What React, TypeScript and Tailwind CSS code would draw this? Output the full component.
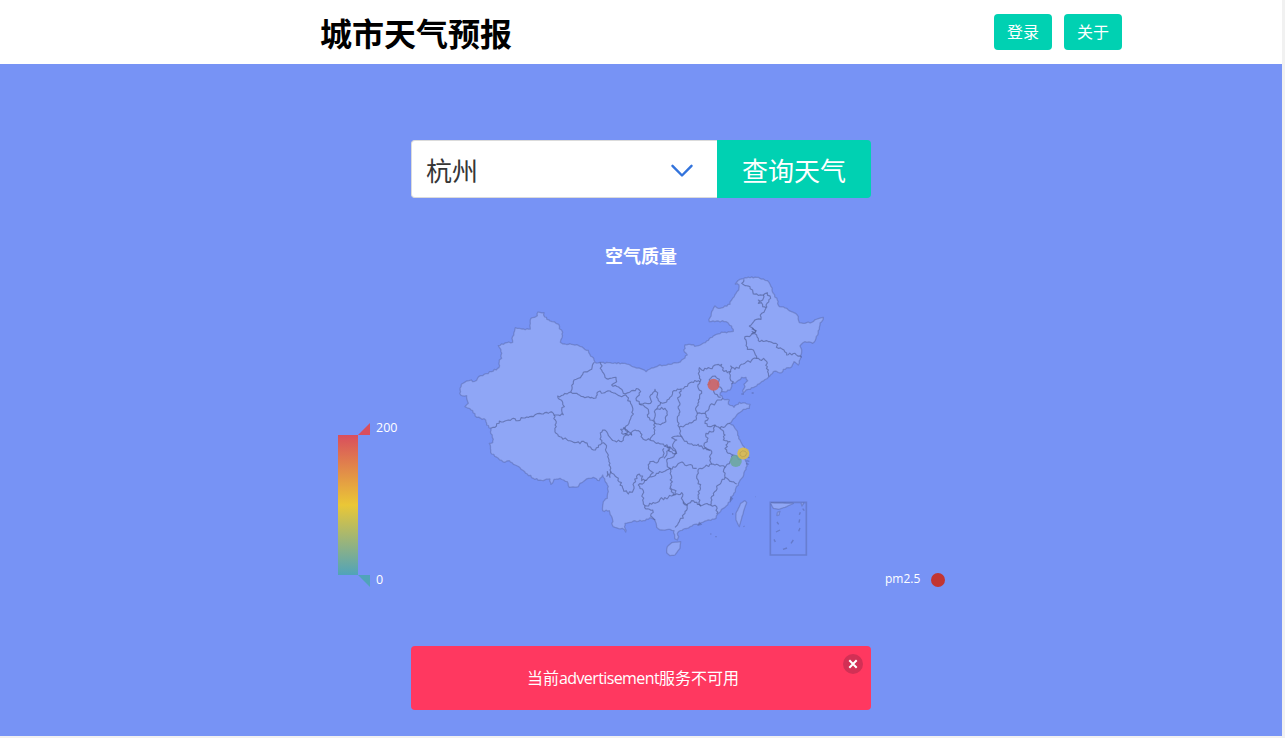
import React from "react";

type P = [number, number];

const parse = (s: string): P[] =>
  s.trim().split(/\s+/).map((p) => p.split(",").map(Number) as P);

// Adds small deterministic bends so that straight runs read as a natural border.
function rough(points: P[], amount: number): string {
  const out: string[] = [];
  points.forEach((p, i) => {
    out.push(p[0] + " " + p[1]);
    const q = points[i + 1];
    if (!q) return;
    const dx = q[0] - p[0];
    const dy = q[1] - p[1];
    const len = Math.hypot(dx, dy);
    const n = Math.floor(len / 5);
    for (let k = 1; k < n; k++) {
      const t = k / n;
      const x = p[0] + dx * t;
      const y = p[1] + dy * t;
      const s = Math.sin(x * 12.9898 + y * 78.233) * 43758.5453;
      const off = (s - Math.floor(s) - 0.5) * amount;
      out.push((x - (dy / len) * off).toFixed(1) + " " + (y + (dx / len) * off).toFixed(1));
    }
  });
  return "M" + out.join("L");
}

const mainland = `30,355 34,343 50,333 64,330 68,335 80,331 86,320 98,317 125,305 147,293 148,270 155,265 153,245 148,232 145,227 165,219 188,217 186,205 196,173 215,177 241,177 243,145 262,137 264,126 282,128 284,141 300,153 318,160 326,163 328,176 338,187 336,203 331,217 345,222 380,224 400,234 415,241 420,254 432,270 435,277 450,277 490,280 525,280 555,292 572,296 588,305 600,297 625,287 660,283 685,278 695,270 712,255 703,245 705,225 720,223 740,228 770,213 790,198 820,187 850,184 845,168 828,155 805,153 778,155 780,143 785,125 795,108 810,115 840,103 845,90 858,70 866,60 867,45 856,42 870,28 885,23 920,22 940,27 957,37 963,50 970,70 982,90 988,110 1010,115 1030,127 1045,140 1048,158 1065,160 1085,157 1105,146 1120,142 1115,155 1110,165 1108,178 1098,205 1088,220 1065,215 1050,228 1055,245 1053,262 1045,285 1032,275 1025,290 1000,298 995,308 970,305 955,322 935,335 915,350 895,358 880,368 878,362 885,350 882,343 893,332 888,322 875,322 860,335 845,342 843,355 830,365 815,365 810,375 818,385 838,390 835,402 852,412 868,397 900,403 898,415 880,418 865,430 840,460 852,470 863,490 870,510 882,530 893,545 880,565 890,578 888,598 875,625 865,640 850,675 840,695 820,715 803,732 798,745 770,752 750,760 720,770 690,782 682,790 686,800 682,810 674,806 672,782 660,778 635,780 620,772 615,750 600,743 580,752 550,753 525,760 527,786 517,775 495,772 487,765 488,750 478,722 458,722 460,695 472,685 475,665 472,645 460,622 458,615 448,632 430,622 415,625 390,640 385,650 358,652 352,635 330,625 312,628 303,643 300,627 280,632 250,625 232,612 210,593 178,572 165,577 145,565 125,552 118,520 128,518 130,508 122,490 122,475 110,465 107,450 80,442 68,422 45,410 55,400 50,377 32,375 30,355`;

const borders = [
  // Xinjiang, Tibet, Qinghai
  "122,475 135,472 148,453 165,453 175,450 190,445 198,452 220,444 250,440 258,433 290,427 310,430 312,435 325,435 340,434 335,420 343,410 338,397 328,388 323,378 340,375 362,366 366,358 372,330 385,325 400,307 425,298 430,280 433,277",
  "312,435 316,450 315,480 325,498 350,508 380,517 405,518 415,530 430,540 445,532 455,520 465,522 475,555 477,570 482,605 480,622 472,605 470,620",
  // Gansu
  "362,366 380,370 400,380 430,385 438,384 445,365 465,368 480,363 500,373 515,380 528,375 545,405 550,432 538,455 525,472 512,478 515,490 530,495 520,505 515,515 495,513 480,502 470,485 458,480 452,495 455,518",
  "450,277 455,300 465,322 480,325 498,322 500,335 485,345 510,355 520,370 535,368 545,362 565,357 572,365 568,375 558,385 568,402 590,400 605,395 602,375 615,358 622,375 625,392 632,398 650,396 660,382 668,365 682,357 692,357 705,350 720,338 745,332 750,335",
  "568,402 580,405 595,418 592,435 600,450 615,460 615,440 613,425 620,417 630,405 632,398",
  "620,417 645,415 652,435 642,458 625,462 615,460 613,485 600,510 580,508 570,485 550,482 545,495 535,485 525,472",
  "520,472 535,485 525,492 545,495",
  "600,510 635,522 660,530 650,555 642,565",
  // Shaanxi, Shanxi, Hebei
  "692,357 685,390 688,420 682,450 688,472 695,500 665,503 680,510 668,530 680,550 660,545 655,535",
  "750,335 745,355 755,370 745,390 740,410 742,430 738,450 688,472",
  "750,335 745,310 748,293 755,300 780,295 805,283 815,283 818,300 832,308 842,305 842,288 855,298 880,282 920,265 910,240 892,238 888,210 885,200 898,200 905,192 918,182 910,178 898,168 920,148 933,148 935,130 945,120 948,105 962,85 952,68 940,75 910,72 900,50 885,47 875,40 882,28",
  "940,75 938,90 925,90 925,100 934,98 938,110 948,112",
  "905,178 909,175 918,182 914,188 905,184",
  "842,305 840,325 850,335 845,342",
  "905,192 920,195 925,212 960,215 978,220 985,235 1002,240 1010,255 1035,250 1055,262",
  "920,265 945,270 952,290 956,320",
  "773,345 782,325 795,318 808,328 803,345 812,352 815,365",
  "790,360 795,372 812,382",
  "742,430 765,430 778,410 808,390 818,385",
  "765,430 775,445 765,460 778,470 795,465 810,475 825,470 840,460",
  "795,465 790,485 768,490 772,515 763,520 770,535 782,540 782,565 785,582",
  "695,500 700,508 720,522 745,523 760,537 780,542",
  "810,475 825,495 820,510 840,515 828,525 830,545 850,555 865,568 880,565",
  "850,555 840,575 825,592 805,585 785,582 765,590 745,598 740,620 750,650 745,680 752,708",
  "825,592 820,605 825,622 845,635 860,642",
  "825,622 805,645 790,670 782,705 765,702 752,708 725,692 710,705 700,695",
  "782,705 800,710 800,732",
  "660,595 675,592 690,578 715,585 740,595",
  "645,528 665,535 678,550 660,565 650,570 652,590 660,595",
  "660,595 665,620 662,655 678,662 670,675 664,665 662,650",
  "670,675 695,668 700,700 712,705 705,730 688,755 675,772",
  "642,535 640,555 625,575 600,575 595,595 610,608 600,620 625,610 650,600 660,595",
  "482,605 495,618 505,625 520,658 535,672 550,660 552,638 568,612 578,618 575,632 590,630 600,620",
  "590,630 565,645 580,662 578,690 585,707 615,700 630,688 655,682 670,675",
  "585,707 588,717 608,720 602,738 615,750",
];

const islands = [
  "650,838 652,830 665,818 692,815 690,835 675,855 660,857 650,848 650,838",
  "885,692 890,698 882,720 872,755 868,770 858,750 858,730 872,700 885,692",
  "963,702 970,715 985,718 1010,710 1030,700 963,698",
  "1053,699 1056,708 1062,698",
  "982,727 990,724 987,735 981,737 982,727",
];

const specks =
  "M981 756L986 763M978 786L990 780M972 808L976 816M999 838L1011 834M1023 820L1030 810M1046 784L1050 774M1047 758L1049 748M1058 716L1063 722M1048 734L1051 727M846 732h4M781 792h3M796 800h4M881 768l2 2M916 680h1M893 562l6 1M889 572l9 2M888 580l8 3M748 758l5 5l-8 2zM842 682l5 4l-5 6zM874 372h8M905 369h6";

function ChinaMap() {
  return (
    <svg width="380" height="300" viewBox="0 0 1140 900" role="img" aria-label="空气质量">
      <g fill="#ffffff" fillOpacity="0.18" stroke="#53619d" strokeOpacity="0.42" strokeWidth="3.8" strokeLinejoin="round">
        <path d={rough(parse(mainland), 5)} />
        {islands.map((d) => (
          <path key={d} d={rough(parse(d), 1)} />
        ))}
      </g>
      <g fill="none" stroke="#4c5a91" strokeOpacity="0.62" strokeWidth="3.4" strokeLinejoin="round">
        {borders.map((d) => (
          <path key={d} d={rough(parse(d), 8)} />
        ))}
      </g>
      <g fill="none" stroke="#5261a0" strokeWidth="4">
        <path d={specks} strokeOpacity="0.5" />
        <path d="M961 697h108v158h-108z" strokeOpacity="0.42" strokeWidth="5" />
      </g>
      <circle cx="790.500" cy="344" r="18" fill="#d2605a" fillOpacity="0.85" />
      <circle cx="857.500" cy="573" r="18" fill="#6ba79b" fillOpacity="0.85" />
      <circle cx="880" cy="550.500" r="18" fill="#e0bd45" fillOpacity="0.88" />
      <path d="M870 548q8-9 16-4q9 6 0 14q-10 5-16-2z" fill="none" stroke="#a18b48" strokeOpacity="0.4" strokeWidth="3" />
    </svg>
  );
}

function Scale() {
  return (
    <div className="flex w-[70px] flex-col">
      <div className="flex h-3 items-center pl-5">
        <svg width="12" height="12">
          <path d="M0 12L12 0V12Z" fill="#d94e5d" />
        </svg>
        <span className="ml-1.5 pb-0.5 text-[12.5px] leading-3">200</span>
      </div>
      <div className="h-[140px] w-5 bg-linear-[to_bottom,#d94e5d,#eac736,#50a3ba]" />
      <div className="flex h-3 items-center pl-5">
        <svg width="12" height="12">
          <path d="M0 0H12V12Z" fill="#50a3ba" />
        </svg>
        <span className="ml-1.5 pb-0.5 text-[12.5px] leading-3">0</span>
      </div>
    </div>
  );
}

export default function App() {
  return (
    <div className="flex h-[738px] w-[1285px] bg-[#f1f1f1] font-['Open_Sans','Noto_Sans_CJK_SC',sans-serif]">
      <div className="flex h-[736px] w-[1282px] flex-col bg-[#7793f5]">
        <header className="flex h-16 shrink-0 items-center justify-between bg-white pr-40 pl-80">
          <h1 className="text-[32px] leading-[48px] font-bold text-black">
            <span className="block pt-1">城市天气预报</span>
          </h1>
          <nav className="flex gap-3 text-base text-white">
            <button className="h-9 w-[58px] rounded bg-[#00d1b2] leading-9">登录</button>
            <button className="h-9 w-[58px] rounded bg-[#00d1b2] leading-9">关于</button>
          </nav>
        </header>

        <main className="flex flex-col items-center text-white">
          <form className="mt-[76px] flex h-[58px] w-[460px] text-[26px]">
            <div className="flex grow items-center justify-between rounded-l border border-r-0 border-[#dbdbdb] bg-white pr-6 pl-3.5 text-[#363636]">
              <span className="pt-1">杭州</span>
              <svg className="mt-[3px]" width="22" height="14" viewBox="0 0 22 14" fill="none" stroke="#3273dc" strokeWidth="2.4" strokeLinecap="round" strokeLinejoin="round">
                <path d="M1.500 1.800L11 11.500L20.500 1.800" />
              </svg>
            </div>
            <button type="button" className="w-[154px] rounded-r bg-[#00d1b2] pt-1">
              查询天气
            </button>
          </form>

          <section className="mt-[42px] flex w-[620px] flex-col">
            <h2 className="flex h-[30px] items-center justify-center pt-0.5 text-[18px] font-bold">空气质量</h2>
            <div className="flex h-[320px] justify-between">
              <div className="flex w-[110px] items-start pt-[153px] pl-[7px]">
                <Scale />
              </div>
              <div className="w-[390px]">
                <div className="ml-[9px]">
                  <ChinaMap />
                </div>
              </div>
              <div className="flex w-[120px] items-start gap-2.5 pt-[303px] pl-[54px]">
                <span className="-mt-px w-9 text-[12px] leading-[14px] whitespace-nowrap">pm2.5</span>
                <span className="size-3.5 shrink-0 rounded-full bg-[#c23531]" />
              </div>
            </div>
          </section>

          <div className="mt-[56px] flex h-16 w-[460px] rounded bg-[#ff3860]">
            <p className="grow pl-3 text-center text-base leading-[64px]">
              当前<span className="tracking-[-0.6px]">advertisement</span>服务不可用
            </p>
            <button aria-label="关闭" className="mt-2 mr-2 flex size-5 items-center justify-center rounded-full bg-[#d23055]">
              <svg width="10" height="10" viewBox="0 0 10 10" stroke="#ffffff" strokeWidth="2">
                <path d="M1.300 1.300L8.700 8.700M8.700 1.300L1.300 8.700" />
              </svg>
            </button>
          </div>
        </main>
      </div>
    </div>
  );
}
